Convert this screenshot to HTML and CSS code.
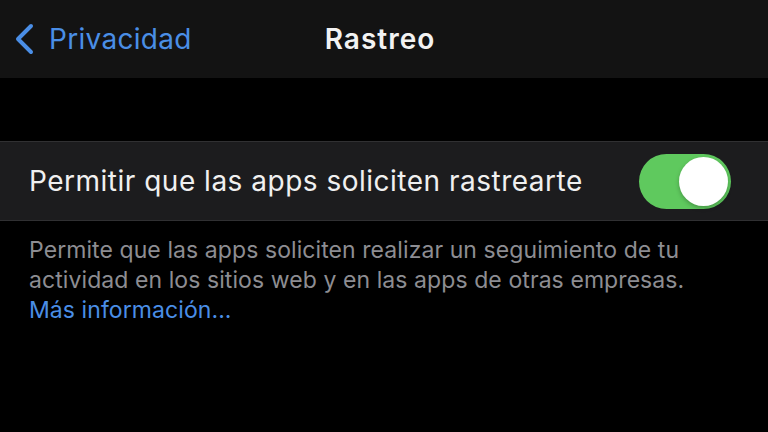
FILE: index.html
```html
<!DOCTYPE html>
<html lang="es">
<head>
<meta charset="utf-8">
<link rel="stylesheet" href="styles.css">
</head>
<body>
<div class="screen">
  <header class="nav">
    <a class="back">
      <svg class="chev" width="22" height="32" viewBox="0 0 22 32"><path d="M18 3 L5 16 L18 29" fill="none" stroke="#4a8ee6" stroke-width="4" stroke-linecap="round" stroke-linejoin="round"/></svg>
      <span class="back-label">Privacidad</span>
    </a>
    <h1 class="title">Rastreo</h1>
  </header>
  <div class="gap"></div>
  <section class="group">
    <div class="row">
      <span class="row-label">Permitir que las apps soliciten rastrearte</span>
      <span class="toggle"><span class="knob"></span></span>
    </div>
  </section>
  <p class="footer">Permite que las apps soliciten realizar un seguimiento de tu actividad en los sitios web y en las apps de otras empresas.<br><span class="link">Más información...</span></p>
</div>
</body>
</html>
```
FILE: styles.css
```css
html, body { margin: 0; padding: 0; background: #000; }
body { width: 768px; height: 432px; overflow: hidden; font-family: Inter, "Noto Sans", sans-serif; }
.screen { width: 768px; height: 432px; display: flex; flex-direction: column; background: #000; }
.nav { height: 78px; background: #131313; display: flex; align-items: center; justify-content: center; position: relative; flex: none; }
.back { position: absolute; left: 13px; top: 0; height: 78px; display: flex; align-items: center; gap: 14px; color: #4a8ee6; }
.chev { display: block; }
.back-label { font-size: 28px; letter-spacing: 0.3px; }
.title { margin: 0 8px 0 0; font-size: 28px; font-weight: 600; color: #f2f2f2; letter-spacing: 1px; }
.gap { height: 63px; flex: none; }
.group { background: #1c1c1e; border-top: 1px solid #303032; border-bottom: 1px solid #303032; flex: none; }
.row { height: 78px; display: flex; align-items: center; justify-content: space-between; padding: 0 37px 0 29px; }
.row-label { font-size: 28px; color: #f0f0f0; letter-spacing: 0.5px; }
.toggle { width: 92px; height: 55px; border-radius: 28px; background: #5fc95e; display: flex; align-items: center; justify-content: flex-end; padding: 0 3px; box-sizing: border-box; }
.knob { width: 49px; height: 49px; border-radius: 50%; background: #fff; box-shadow: 0 2px 4px rgba(0,0,0,0.25); }
.footer { margin: 14px 0 0; padding: 0 29px; font-size: 23px; line-height: 30px; color: #8d8d92; letter-spacing: 0.08px; }
.link { color: #4a8ee6; }
```
